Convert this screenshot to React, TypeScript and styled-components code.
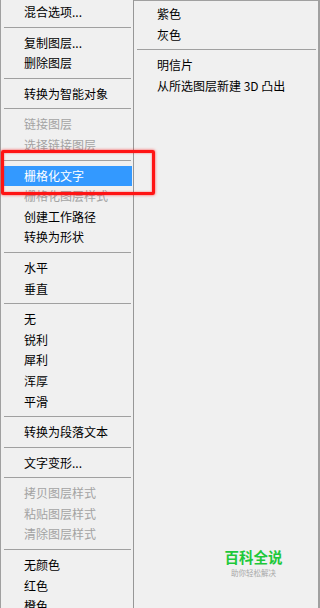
import React from 'react';
import styled, { createGlobalStyle } from 'styled-components';

const GlobalStyle = createGlobalStyle`
  html, body {
    margin: 0;
    padding: 0;
    background: #f0f0f0;
  }
  body {
    font-family: "Microsoft YaHei", "Noto Sans CJK SC", "Noto Sans", sans-serif;
    font-size: 12px;
    color: #000;
  }
`

const Page = styled.div`
  position: relative;
  width: 320px;
  height: 608px;
  overflow: hidden;
  display: flex;
  background: #f0f0f0;
`

const LeftMenu = styled.div`
  width: 134px;
  height: 100%;
  padding-top: 2px;
  box-sizing: border-box;
  border-left: 1px solid #a0a0a0;
  border-right: 1px solid #979797;
  display: flex;
  flex-direction: column;
`

const RightMenu = styled.div`
  flex: 1;
  height: 100%;
  padding-top: 3px;
  box-sizing: border-box;
  border-top: 1px solid #a0a0a0;
  border-right: 2px solid #a0a0a0;
  display: flex;
  flex-direction: column;
`

const Item = styled.div<{ $disabled?: boolean; $active?: boolean }>`
  height: 20.6px;
  line-height: 20px;
  flex-shrink: 0;
  margin: 0 1px 0 2px;
  padding-left: 21px;
  white-space: nowrap;
  color: ${p => (p.$active ? '#fff' : p.$disabled ? '#a3a3a3' : '#000')};
  background: ${p => (p.$active ? '#3399ff' : 'transparent')};
`

const Separator = styled.div`
  height: 10px;
  flex-shrink: 0;
  box-sizing: border-box;
  padding: 4px 2px 5px 3px;

  &::after {
    content: '';
    display: block;
    height: 1px;
    background: #a0a0a0;
  }
`

const Highlight = styled.div`
  position: absolute;
  left: 1px;
  top: 150px;
  width: 154px;
  height: 45px;
  box-sizing: border-box;
  border: 3px solid #ff1414;
  border-radius: 2px;
  box-shadow: 0 0 3px rgba(255, 0, 0, 0.7), inset 0 0 2px rgba(255, 0, 0, 0.6);
  pointer-events: none;
`

const Watermark = styled.div`
  position: absolute;
  left: 224px;
  top: 549px;
  width: 59px;
  display: flex;
  flex-direction: column;
  align-items: center;
  gap: 4px;
`

const MarkTitle = styled.div`
  font-size: 14.5px;
  line-height: 15px;
  font-weight: 700;
  color: #1ec83a;
`

const MarkSub = styled.div`
  font-size: 7.5px;
  line-height: 9px;
  color: #a8a8a8;
`

type Entry = { label: string; disabled?: boolean; active?: boolean } | '-'

const left: Entry[] = [
  { label: '混合选项...' },
  '-',
  { label: '复制图层...' },
  { label: '删除图层' },
  '-',
  { label: '转换为智能对象' },
  '-',
  { label: '链接图层', disabled: true },
  { label: '选择链接图层', disabled: true },
  '-',
  { label: '栅格化文字', active: true },
  { label: '栅格化图层样式', disabled: true },
  { label: '创建工作路径' },
  { label: '转换为形状' },
  '-',
  { label: '水平' },
  { label: '垂直' },
  '-',
  { label: '无' },
  { label: '锐利' },
  { label: '犀利' },
  { label: '浑厚' },
  { label: '平滑' },
  '-',
  { label: '转换为段落文本' },
  '-',
  { label: '文字变形...' },
  '-',
  { label: '拷贝图层样式', disabled: true },
  { label: '粘贴图层样式', disabled: true },
  { label: '清除图层样式', disabled: true },
  '-',
  { label: '无颜色' },
  { label: '红色' },
  { label: '橙色' },
]

const right: Entry[] = [
  { label: '紫色' },
  { label: '灰色' },
  '-',
  { label: '明信片' },
  { label: '从所选图层新建 3D 凸出' },
]

const renderEntries = (entries: Entry[]) =>
  entries.map((e, i) =>
    e === '-' ? (
      <Separator key={i} />
    ) : (
      <Item key={i} $disabled={e.disabled} $active={e.active}>
        {e.label}
      </Item>
    )
  )

const App: React.FC = () => {
  return <>
    <GlobalStyle />
    <Page>
      <LeftMenu>{renderEntries(left)}</LeftMenu>
      <RightMenu>{renderEntries(right)}</RightMenu>
      <Highlight />
      <Watermark>
        <MarkTitle>百科全说</MarkTitle>
        <MarkSub>助你轻松解决</MarkSub>
      </Watermark>
    </Page>
  </>
}

export default App;
